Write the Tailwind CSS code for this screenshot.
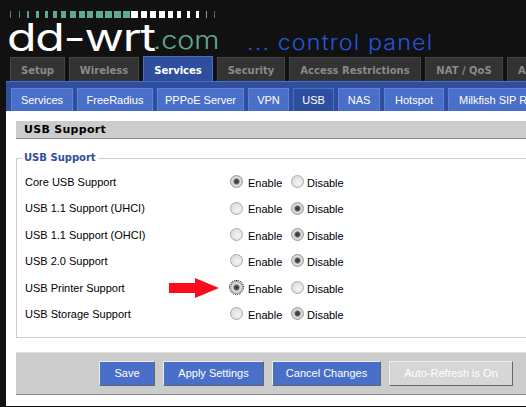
<!DOCTYPE html>
<html lang="en">
<head>
    <meta charset="UTF-8" />
    <title>DD-WRT - USB</title>
    <script src="https://cdn.jsdelivr.net/npm/@tailwindcss/browser@4"></script>
</head>
<body class="bg-[#111111] font-['Liberation_Sans',sans-serif] text-[11px] overflow-hidden">
    <div class="w-[526px] h-[407px] overflow-hidden">
        <!-- Logo -->
        <div class="h-[57px] pl-[6px] pt-[11px] relative">
            <div class="grid grid-cols-[repeat(24,8.9px)] h-[7px] justify-items-center">
                <i class="w-[1px] bg-[#4d8a78]"></i><i class="w-[1px] bg-[#4d8a78]"></i><i class="w-[2px] bg-[#5b9c88]"></i><i class="w-[3px] bg-[#5fa892]"></i><i class="w-[3px] bg-[#5fa892]"></i><i class="w-[4px] bg-[#5fa892]"></i><i class="w-[5px] bg-[#5fa892]"></i><i class="w-[6px] bg-[#5fa892]"></i><i class="w-[6px] bg-[#5fa892]"></i><i class="w-[6px] bg-[#5fa892]"></i><i class="w-[7px] bg-[#5fa892]"></i><i class="w-[7px] bg-[#5fa892]"></i><i class="w-[7px] bg-[#5fa892]"></i><i class="w-[7px] bg-[#5fa892]"></i><i class="w-[7px] bg-white"></i><i class="w-[6px] bg-white"></i><i class="w-[6px] bg-white"></i><i class="w-[6px] bg-white"></i><i class="w-[5px] bg-white"></i><i class="w-[4px] bg-white"></i><i class="w-[3px] bg-white"></i><i class="w-[3px] bg-white"></i><i class="w-[1px] bg-[#999999]"></i><i class="w-[1px] bg-[#666666]"></i>
            </div>
            <div class="absolute left-[7px] top-[13px] whitespace-nowrap origin-left scale-x-[1.27] font-['Inter',sans-serif] font-normal text-[38px] leading-[48px] tracking-[-1px] text-white">dd-wrt</div>
            <div class="absolute left-[153px] top-[25px] whitespace-nowrap origin-left scale-x-[1.2] font-['Inter',sans-serif] font-light text-[24px] leading-[32px] text-[#5fa892]">.com</div>
            <div class="absolute left-[247px] top-[30px] whitespace-nowrap origin-left scale-x-[1.11] font-['Inter',sans-serif] font-light text-[21px] leading-[26px] tracking-[1px] text-[#2456dc]">... control panel</div>
        </div>

        <!-- Main tabs -->
        <div class="flex items-end h-[24px] pl-[10px] gap-[4px] font-['DejaVu_Sans',sans-serif] font-bold text-[10px] text-[#8a8a8a] whitespace-nowrap">
            <div class="w-[55px] h-[24px] pt-[2px] shrink-0 bg-[#333333] border border-b-0 border-[#444444] flex items-center justify-center">Setup</div>
            <div class="w-[70px] h-[24px] pt-[2px] shrink-0 bg-[#333333] border border-b-0 border-[#444444] flex items-center justify-center">Wireless</div>
            <div class="w-[70px] h-[25px] pt-[2px] shrink-0 bg-[#2f4f9e] border border-b-0 border-[#4a6fc8] text-white flex items-center justify-center">Services</div>
            <div class="w-[68px] h-[24px] pt-[2px] shrink-0 bg-[#333333] border border-b-0 border-[#444444] flex items-center justify-center">Security</div>
            <div class="w-[132px] h-[24px] pt-[2px] shrink-0 bg-[#333333] border border-b-0 border-[#444444] flex items-center justify-center">Access Restrictions</div>
            <div class="w-[78px] h-[24px] pt-[2px] shrink-0 bg-[#333333] border border-b-0 border-[#444444] flex items-center justify-center">NAT / QoS</div>
            <div class="w-[60px] h-[24px] pt-[2px] shrink-0 bg-[#333333] border border-b-0 border-[#444444] pl-[10px] flex items-center">Administration</div>
        </div>

        <!-- Sub tabs -->
        <div class="ml-[6px] h-[30px] pt-[6px] pl-[5px] bg-[#2f4f9e] border-t border-[#4a6fc8] flex gap-[4px] text-white whitespace-nowrap overflow-hidden">
            <div class="w-[62px] shrink-0 bg-[#4a6fc8] border border-b-0 border-[#5f82d8] flex items-center justify-center">Services</div>
            <div class="w-[76px] shrink-0 bg-[#4a6fc8] border border-b-0 border-[#5f82d8] flex items-center justify-center">FreeRadius</div>
            <div class="w-[87px] shrink-0 bg-[#4a6fc8] border border-b-0 border-[#5f82d8] flex items-center justify-center">PPPoE Server</div>
            <div class="w-[41px] shrink-0 bg-[#4a6fc8] border border-b-0 border-[#5f82d8] flex items-center justify-center">VPN</div>
            <div class="w-[41px] shrink-0 bg-[#2f4f9e] border border-b-0 border-[#4a6fc8] flex items-center justify-center">USB</div>
            <div class="w-[42px] shrink-0 bg-[#4a6fc8] border border-b-0 border-[#5f82d8] flex items-center justify-center">NAS</div>
            <div class="w-[60px] shrink-0 bg-[#4a6fc8] border border-b-0 border-[#5f82d8] flex items-center justify-center">Hotspot</div>
            <div class="w-[120px] shrink-0 bg-[#4a6fc8] border border-b-0 border-[#5f82d8] pl-[10px] flex items-center">Milkfish SIP Router</div>
        </div>

        <!-- Content -->
        <div class="ml-[6px] h-[295px] bg-white pt-[10px] pl-[10px] text-black">
            <div class="h-[18px] pt-[2px] bg-[#cccccc] border-b border-[#888888] pl-[8px] font-['DejaVu_Sans',sans-serif] font-bold text-[11px] tracking-[0.3px] flex items-center">USB Support</div>

            <fieldset class="mt-[12px] h-[187px] border border-r-0 border-[#cccccc] pl-[8px] pr-0 relative">
                <legend class="ml-[-3px] px-[2px] font-['DejaVu_Sans',sans-serif] font-bold text-[10px] text-[#2f4f9e] leading-[14px]">USB Support</legend>

                <div class="h-[26.4px] mt-[4px] flex items-center">
                    <span class="w-[205px]">Core USB Support</span>
                    <span class="w-[13px] h-[13px] mt-[-1px] rounded-full border border-[#999999] bg-[radial-gradient(circle,#2f2f2f_0,#555555_28%,#e0e0e0_48%,#bbbbbb_100%)]"></span>
                    <span class="ml-[5px] w-[43px] pt-[2px]">Enable</span>
                    <span class="w-[13px] h-[13px] mt-[-1px] rounded-full border border-[#aaaaaa] bg-[radial-gradient(circle_at_60%_60%,#f4f4f4,#d4d4d4)]"></span>
                    <span class="ml-[3px] pt-[2px]">Disable</span>
                </div>
                <div class="h-[26.4px] flex items-center">
                    <span class="w-[205px]">USB 1.1 Support (UHCI)</span>
                    <span class="w-[13px] h-[13px] mt-[-1px] rounded-full border border-[#aaaaaa] bg-[radial-gradient(circle_at_60%_60%,#f4f4f4,#d4d4d4)]"></span>
                    <span class="ml-[5px] w-[43px] pt-[2px]">Enable</span>
                    <span class="w-[13px] h-[13px] mt-[-1px] rounded-full border border-[#999999] bg-[radial-gradient(circle,#2f2f2f_0,#555555_28%,#e0e0e0_48%,#bbbbbb_100%)]"></span>
                    <span class="ml-[3px] pt-[2px]">Disable</span>
                </div>
                <div class="h-[26.4px] flex items-center">
                    <span class="w-[205px]">USB 1.1 Support (OHCI)</span>
                    <span class="w-[13px] h-[13px] mt-[-1px] rounded-full border border-[#aaaaaa] bg-[radial-gradient(circle_at_60%_60%,#f4f4f4,#d4d4d4)]"></span>
                    <span class="ml-[5px] w-[43px] pt-[2px]">Enable</span>
                    <span class="w-[13px] h-[13px] mt-[-1px] rounded-full border border-[#999999] bg-[radial-gradient(circle,#2f2f2f_0,#555555_28%,#e0e0e0_48%,#bbbbbb_100%)]"></span>
                    <span class="ml-[3px] pt-[2px]">Disable</span>
                </div>
                <div class="h-[26.4px] flex items-center">
                    <span class="w-[205px]">USB 2.0 Support</span>
                    <span class="w-[13px] h-[13px] mt-[-1px] rounded-full border border-[#aaaaaa] bg-[radial-gradient(circle_at_60%_60%,#f4f4f4,#d4d4d4)]"></span>
                    <span class="ml-[5px] w-[43px] pt-[2px]">Enable</span>
                    <span class="w-[13px] h-[13px] mt-[-1px] rounded-full border border-[#999999] bg-[radial-gradient(circle,#2f2f2f_0,#555555_28%,#e0e0e0_48%,#bbbbbb_100%)]"></span>
                    <span class="ml-[3px] pt-[2px]">Disable</span>
                </div>
                <div class="h-[26.4px] flex items-center relative">
                    <span class="w-[205px]">USB Printer Support</span>
                    <span class="w-[13px] h-[13px] mt-[-1px] rounded-full border border-[#999999] bg-[radial-gradient(circle,#2f2f2f_0,#555555_28%,#e0e0e0_48%,#bbbbbb_100%)] outline-1 outline-dotted outline-black"></span>
                    <span class="ml-[5px] w-[43px] pt-[2px]">Enable</span>
                    <span class="w-[13px] h-[13px] mt-[-1px] rounded-full border border-[#aaaaaa] bg-[radial-gradient(circle_at_60%_60%,#f4f4f4,#d4d4d4)]"></span>
                    <span class="ml-[3px] pt-[2px]">Disable</span>
                    <!-- red arrow -->
                    <svg class="absolute left-[144px] top-[3px]" width="50" height="20" viewBox="0 0 50 20"><path d="M0 5H26V0L50 10L26 20V15H0Z" fill="#fb0d1b"/></svg>
                </div>
                <div class="h-[26.4px] flex items-center">
                    <span class="w-[205px]">USB Storage Support</span>
                    <span class="w-[13px] h-[13px] mt-[-1px] rounded-full border border-[#aaaaaa] bg-[radial-gradient(circle_at_60%_60%,#f4f4f4,#d4d4d4)]"></span>
                    <span class="ml-[5px] w-[43px] pt-[2px]">Enable</span>
                    <span class="w-[13px] h-[13px] mt-[-1px] rounded-full border border-[#999999] bg-[radial-gradient(circle,#2f2f2f_0,#555555_28%,#e0e0e0_48%,#bbbbbb_100%)]"></span>
                    <span class="ml-[3px] pt-[2px]">Disable</span>
                </div>
            </fieldset>

            <!-- Buttons -->
            <div class="mt-[14px] h-[43px] bg-[#cccccc] border-t border-t-[#dddddd] border-b border-b-[#888888] pl-[83px] pt-[8px] flex gap-[8px] text-white">
                <div class="w-[56px] h-[25px] bg-[#4a6fc8] border border-[#eeeeee] border-r-[#666666] border-b-[#666666] flex items-center justify-center">Save</div>
                <div class="w-[101px] h-[25px] bg-[#4a6fc8] border border-[#eeeeee] border-r-[#666666] border-b-[#666666] flex items-center justify-center">Apply Settings</div>
                <div class="w-[109px] h-[25px] bg-[#4a6fc8] border border-[#eeeeee] border-r-[#666666] border-b-[#666666] flex items-center justify-center">Cancel Changes</div>
                <div class="w-[124px] h-[25px] bg-[#d6d6d6] border border-[#eeeeee] border-r-[#666666] border-b-[#666666] flex items-center justify-center">Auto-Refresh is On</div>
            </div>
        </div>
    </div>
</body>
</html>
